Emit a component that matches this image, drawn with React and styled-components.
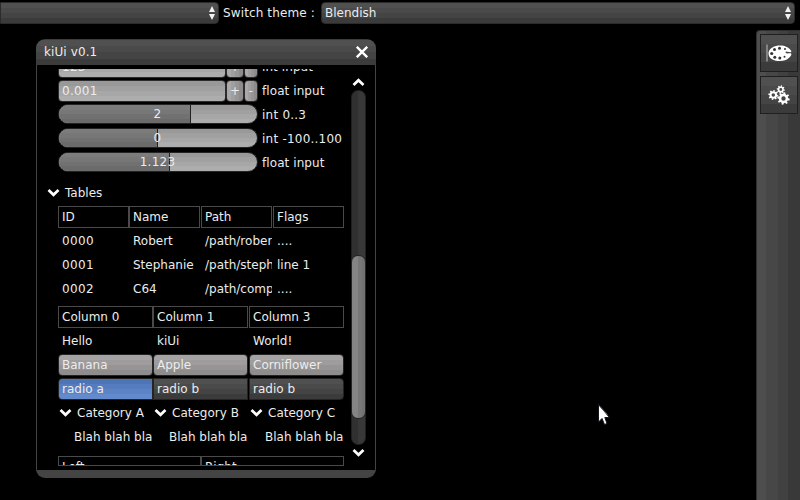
import React from 'react';
import styled, { createGlobalStyle, css } from 'styled-components';

const Global = createGlobalStyle`
  *, *::before, *::after { box-sizing: border-box; }
  body {
    margin: 0;
    background: #000;
    color: #ececec;
    font: 12px/24px "DejaVu Sans", sans-serif;
    overflow: hidden;
    cursor: default;
  }
  svg { display: block; }
`;

const darkBands = css`
  background: linear-gradient(#505050 0 25%, #4a4a4a 25% 50%, #444 50% 75%, #3b3b3b 75%);
`;
const lightBands = css`
  background: linear-gradient(#999 0 25%, #a0a0a0 25% 50%, #a7a7a7 50% 75%, #adadad 75%);
`;

const Screen = styled.div`
  position: relative;
  width: 800px;
  height: 500px;
  overflow: hidden;
`;
const TopBar = styled.header`
  display: flex;
  height: 30px;
  padding: 2px 5px 0 0;
`;
const Select = styled.div`
  ${darkBands}
  display: flex;
  align-items: center;
  justify-content: space-between;
  width: ${(p) => p.$width}px;
  height: 22px;
  padding: 0 3px 0 3px;
  border: 1px solid #2b2b2b;
  border-radius: ${(p) => (p.$flush ? '0 4px 4px 0' : '4px')};
`;
const BarLabel = styled.span`
  width: 102px;
  padding-left: 4px;
  line-height: 22px;
  letter-spacing: 0.12px;
`;
const Main = styled.main`
  display: flex;
  justify-content: space-between;
  height: 470px;
`;
const Window = styled.section`
  display: flex;
  flex-direction: column;
  width: 340px;
  height: 439px;
  margin: 9px 0 0 36px;
  border-radius: 9px;
  overflow: hidden;
`;
const TitleBar = styled.div`
  ${darkBands}
  display: flex;
  justify-content: space-between;
  align-items: center;
  height: 26px;
  padding: 0 8px 1px 8px;
  border-top: 1px solid #3c3c3c;
  letter-spacing: 0.1px;
`;
const Body = styled.div`
  display: flex;
  height: 405px;
  padding: 4px 0;
  border: solid #444;
  border-width: 0 1px;
`;
const WindowFoot = styled.div`
  height: 8px;
  background: #444;
`;
const Viewport = styled.div`
  width: 314px;
  height: 397px;
  padding-left: 10px;
  overflow: hidden;
`;
const Scrolled = styled.div`
  margin-top: -14px;
`;
const Indent = styled.div`
  width: 286px;
  margin-left: 11px;
`;
const Field = styled.div`
  display: flex;
  align-items: flex-start;
  height: 24px;
  padding-top: 1px;
`;
const FieldLabel = styled.span`
  margin-left: 4px;
  line-height: 22px;
  letter-spacing: ${(p) => (p.$wide ? 0.23 : 0.08)}px;
  white-space: nowrap;
`;
const Input = styled.div`
  ${lightBands}
  width: 168px;
  height: 22px;
  padding-left: 3px;
  border: 1px solid #2c2c2c;
  border-radius: 4px;
  line-height: 20px;
  letter-spacing: 0.25px;
`;
const Step = styled.button`
  width: ${(p) => p.$width}px;
  height: 22px;
  padding: 0;
  border: 1px solid #2c2c2c;
  border-radius: 4px;
  background: linear-gradient(90deg, #aaa8a8 0 25%, #a09e9e 25% 50%, #979595 50% 75%, #8d8b8b 75%);
  color: #ececec;
  font: inherit;
  line-height: 20px;
`;
const Track = styled.div`
  ${lightBands}
  position: relative;
  width: 200px;
  height: 20px;
  border: 1px solid #242424;
  border-radius: 10px;
  overflow: hidden;
`;
const Fill = styled.div`
  height: 100%;
  border-right: 1px solid #222;
  background: linear-gradient(#7c7c7c 0 25%, #777 25% 50%, #717171 50% 75%, #6b6b6b 75%);
`;
const TrackValue = styled.span`
  position: absolute;
  inset: 0 1px 0 0;
  text-align: center;
  line-height: 18px;
  letter-spacing: 0.25px;
`;
const Foldout = styled.div`
  display: flex;
  align-items: center;
  gap: 5px;
  height: 24px;
  padding-left: ${(p) => p.$inset || 0}px;
  margin: ${(p) => p.$top || 0}px 0 0;
  overflow: hidden;
  white-space: nowrap;

  svg { margin-bottom: 2px; }
`;
const Table = styled.div`
  display: grid;
  grid-template-columns: ${(p) => p.$columns};
  grid-auto-rows: 24px;
  margin-bottom: ${(p) => p.$after || 4}px;
`;
const HeadCell = styled.div`
  height: ${(p) => p.$height || 22}px;
  margin: 1px ${(p) => (p.$spaced ? 1 : 0)}px 0 0;
  padding-left: 3px;
  border: 1px solid #4a4a4a;
  line-height: 20px;
  overflow: hidden;
`;
const Cell = styled.div`
  margin-right: 1px;
  padding-left: ${(p) => p.$inset || 4}px;
  line-height: 24px;
  letter-spacing: ${(p) => (p.$digits ? 0.37 : 0)}px;
  white-space: nowrap;
  overflow: hidden;
`;
const Button = styled.div`
  height: 22px;
  margin: 1px ${(p) => (p.$spaced ? 1 : 0)}px 0 0;
  padding-left: 3px;
  border: 1px solid #242424;
  border-radius: 4px;
  background: linear-gradient(#a5a3a3 0 25%, #9e9c9c 25% 50%, #969494 50% 75%, #8e8c8c 75%);
  line-height: 20px;
`;
const Radio = styled(Button)`
  border-radius: ${(p) => p.$radius || 0};
  ${(p) =>
    p.$active
      ? css`background: linear-gradient(#4d75b6 0 25%, #557cbf 25% 50%, #5b83c6 50% 75%, #628acd 75%);`
      : darkBands}
`;
const Scrollbar = styled.div`
  display: flex;
  flex-direction: column;
  align-items: center;
  width: 15px;
  padding-top: 9px;
`;
const Groove = styled.div`
  width: 15px;
  height: 355px;
  margin: 3px 0;
  padding-top: 164px;
  border: 1px solid #202020;
  border-radius: 7px;
  background: linear-gradient(90deg, #303030 0 46%, #383838 46%);
`;
const Thumb = styled.div`
  width: 15px;
  height: 164px;
  margin-left: -1px;
  border: 1px solid #242424;
  border-radius: 7px;
  background: linear-gradient(90deg, #848484 0 50%, #777 50% 75%, #727272 75%);
`;
const Dock = styled.aside`
  display: flex;
  flex-direction: column;
  align-items: center;
  gap: 4px;
  width: 44px;
  padding: 3px 2px 0 3px;
  border-left: 1px solid #303030;
  border-top: 1px solid #303030;
  border-radius: 4px 0 0 0;
  background: linear-gradient(90deg, #4e4e4e 0 22%, #474747 22% 48%, #414141 48% 73%, #393939 73%);
`;
const Tool = styled.button`
  ${darkBands}
  display: flex;
  align-items: center;
  justify-content: center;
  width: 38px;
  height: 38px;
  padding: 0;
  border: 1px solid #202020;
`;
const Pointer = styled.svg`
  position: absolute;
  left: 597px;
  top: 403px;
`;

const Spinner = () => (
  <svg width="6" height="14" viewBox="0 0 6 14" fill="#f2f2f2">
    <path d="M3 0 6 6H0ZM0 8H6L3 14Z" />
  </svg>
);
const Chevron = ({ up }) => (
  <svg width="13" height="9" viewBox="0 0 13 9" fill="none" stroke="#fff" strokeWidth="2.7">
    <path d={up ? 'M1.5 7 6.5 2.2 11.5 7' : 'M1.5 2 6.5 6.8 11.5 2'} />
  </svg>
);
const Close = () => (
  <svg width="12" height="12" viewBox="0 0 12 12" stroke="#fff" strokeWidth="2.4">
    <path d="M.8 .8 11.200 11.200M11.200 .8 .8 11.200" />
  </svg>
);
const Palette = () => (
  <svg width="26" height="18" viewBox="0 0 26 18">
    <path d="M1 .5V17.5" stroke="#999" strokeWidth="1.5" />
    <path
      fill="#fff"
      d="M2.5 9C3 4 8.500 1.500 14 1.500c5 0 9 2 11 5 1 1.600-.4 2-2 1.600-2.200-.5-3.800-1-3.400.5.5 1.300 3 .6 4.600.6 2.300.2 1 2.800-1.200 4.600C21 16 17.500 17 14 17 8 17 2.200 14.500 2.500 9Z"
    />
    <g fill="#333">
      <circle cx="5.700" cy="9.500" r="1.600" />
      <circle cx="8.500" cy="5.500" r="1.500" />
      <circle cx="13.500" cy="4.300" r="1.500" />
      <circle cx="8.800" cy="13.200" r="1.500" />
      <circle cx="13.800" cy="14" r="1.500" />
      <circle cx="18.500" cy="12.800" r="1" />
      <circle cx="19" cy="5" r="1" />
    </g>
  </svg>
);
const Gear = ({ x, y, r }) => (
  <g transform={`translate(${x} ${y}) scale(${r})`}>
    <circle r=".58" fill="none" stroke="#fff" strokeWidth=".42" />
    {[0, 45, 90, 135, 180, 225, 270, 315].map((a) => (
      <path key={a} d="M-.2 -.7-.14 -1.050H.14L.2 -.7Z" fill="#fff" transform={`rotate(${a + 10})`} />
    ))}
  </g>
);
const Gears = () => (
  <svg width="22" height="20" viewBox="0 0 22 20">
    <Gear x={5.300} y={10} r={4.800} />
    <Gear x={12.800} y={4.500} r={3.900} />
    <Gear x={15.500} y={13.500} r={5.900} />
  </svg>
);

const NumberField = ({ value, label }) => (
  <Field>
    <Input>{value}</Input>
    <Step $width={18}>+</Step>
    <Step $width={14}>-</Step>
    <FieldLabel>{label}</FieldLabel>
  </Field>
);
const Slider = ({ value, fill, label, wide }) => (
  <Field>
    <Track>
      <Fill style={{ width: fill }} />
      <TrackValue>{value}</TrackValue>
    </Track>
    <FieldLabel $wide={wide}>{label}</FieldLabel>
  </Field>
);

const people = [
  ['0000', 'Robert', '/path/rober', '....'],
  ['0001', 'Stephanie', '/path/steph', 'line 1'],
  ['0002', 'C64', '/path/comp', '....'],
];
const sliders = [
  ['2', 132, 'int 0..3'],
  ['0', 99, 'int -100..100'],
  ['1.123', 111, 'float input'],
];

export default function App() {
  return (
    <Screen>
      <Global />
      <TopBar>
        <Select $width={219} $flush>
          <span />
          <Spinner />
        </Select>
        <BarLabel>Switch theme :</BarLabel>
        <Select $width={474}>
          Blendish
          <Spinner />
        </Select>
      </TopBar>
      <Main>
        <Window>
          <TitleBar>
            kiUi v0.1
            <Close />
          </TitleBar>
          <Body>
            <Viewport>
              <Scrolled>
                <Indent>
                  <NumberField value="123" label="int input" />
                  <NumberField value="0.001" label="float input" />
                  {sliders.map(([value, fill, label]) => (
                    <Slider key={value} value={value} fill={fill} label={label} wide={label.length > 11 || label.includes('..')} />
                  ))}
                </Indent>
                <Foldout $top={6}>
                  <Chevron />
                  Tables
                </Foldout>
                <Indent>
                  <Table $columns="71px 72px 72px 71px">
                    {['ID', 'Name', 'Path', 'Flags'].map((name, i) => (
                      <HeadCell key={name} $spaced={i === 1 || i === 2}>{name}</HeadCell>
                    ))}
                    {people.flat().map((text, i) => (
                      <Cell key={i} $digits={i % 4 === 0}>{text}</Cell>
                    ))}
                  </Table>
                  <Table $columns="95px 96px 95px" $after={6}>
                    {['Column 0', 'Column 1', 'Column 3'].map((name, i) => (
                      <HeadCell key={name} $spaced={i === 1}>{name}</HeadCell>
                    ))}
                    {['Hello', 'kiUi', 'World!'].map((text) => (
                      <Cell key={text}>{text}</Cell>
                    ))}
                    {['Banana', 'Apple', 'Corniflower'].map((text, i) => (
                      <Button key={text} $spaced={i === 1}>{text}</Button>
                    ))}
                    <Radio $active $radius="4px 0 0 4px">radio a</Radio>
                    <Radio $spaced>radio b</Radio>
                    <Radio $radius="0 4px 4px 0">radio b</Radio>
                    {['A', 'B', 'C'].map((letter) => (
                      <Foldout key={letter} $inset={1}>
                        <Chevron />
                        Category {letter}
                      </Foldout>
                    ))}
                    {[0, 1, 2].map((i) => (
                      <Cell key={i} $inset={16}>Blah blah bla</Cell>
                    ))}
                  </Table>
                  <Table $columns="143px 143px">
                    <HeadCell $height={10}>Left</HeadCell>
                    <HeadCell $height={10}>Right</HeadCell>
                  </Table>
                </Indent>
              </Scrolled>
            </Viewport>
            <Scrollbar>
              <Chevron up />
              <Groove>
                <Thumb />
              </Groove>
              <Chevron />
            </Scrollbar>
          </Body>
          <WindowFoot />
        </Window>
        <Dock>
          <Tool aria-label="Palette"><Palette /></Tool>
          <Tool aria-label="Settings"><Gears /></Tool>
        </Dock>
      </Main>
      <Pointer width="14" height="24" viewBox="0 0 14 24">
        <path d="M1.500 1.500V19L5 15.500 7.500 21.500 10 20.500 7.800 14.500H12.500Z" fill="#fff" stroke="#15151f" />
        <path d="M3 3.500 10.500 11.500" stroke="#666" strokeWidth=".8" />
      </Pointer>
    </Screen>
  );
}
